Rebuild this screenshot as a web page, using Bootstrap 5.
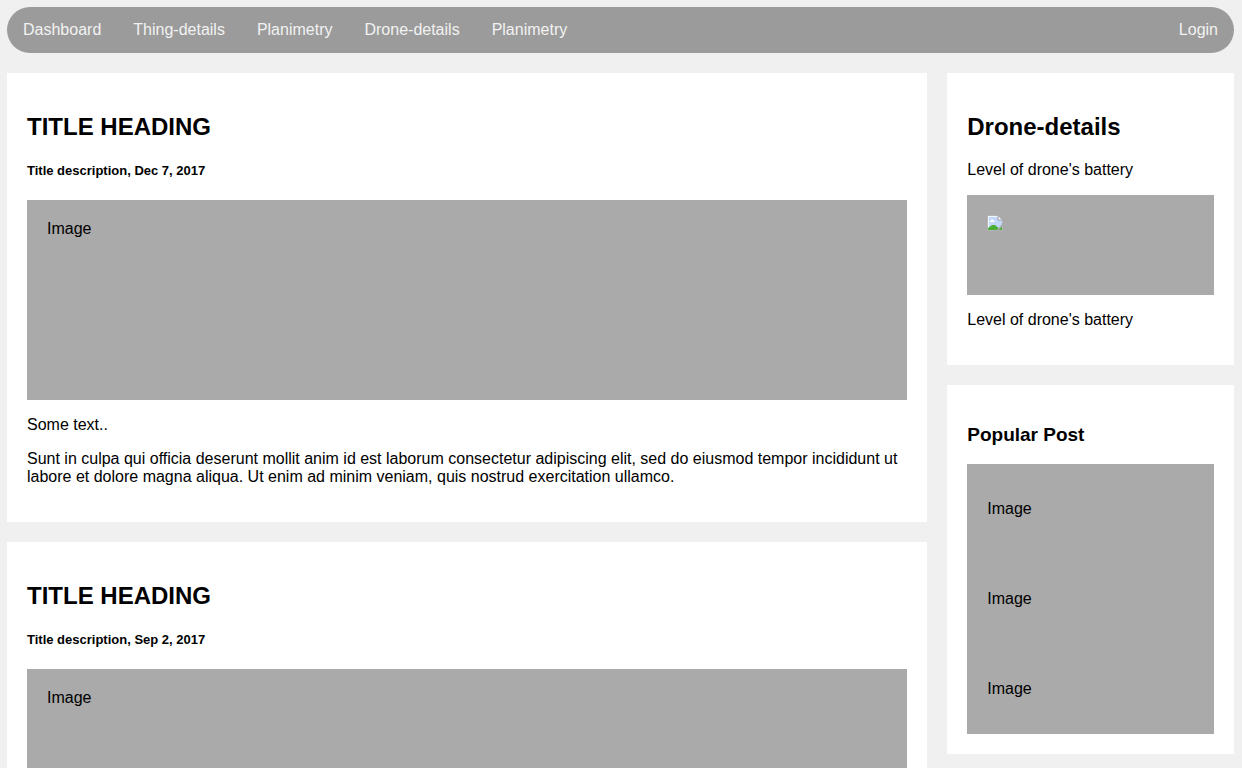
<!DOCTYPE html>
<html lang="en">
<head>
<meta charset="utf-8">
<meta name="viewport" content="width=device-width, initial-scale=1">
<title>Drone-details</title>
<link href="https://cdn.jsdelivr.net/npm/bootstrap@5.3.0/dist/css/bootstrap.min.css" rel="stylesheet">
<style>
  body { background: #f0f0f0; color: #000; font-family: "Liberation Sans", Arial, sans-serif; font-size: 16px; line-height: 18px; padding: 7px 8px 20px 7px; }
  .topnav { background: #9b9b9b; border-radius: 24px; }
  .topnav .navbar-nav .nav-link { color: #f2f2f2; padding: 14px 16px; }
  .topnav .navbar-nav .nav-link:hover { color: #000; background: #ddd; }
  .panel { background: #fff; padding: 20px; margin-top: 20px; }
  .side { padding-left: 20px; }
  h2 { font-size: 24px; line-height: 28px; font-weight: 700; margin: 20px 0; }
  h3 { font-size: 19px; line-height: 21px; font-weight: 700; margin: 19px 0; }
  h5 { font-size: 13px; line-height: 19px; font-weight: 700; margin: 0 0 20px; }
  p { margin: 16px 0; }
  .picture { background: #aaa; padding: 20px; }
  .tall { height: 200px; }
  .short { height: 100px; }
  .post { height: 90px; }
</style>
</head>
<body>
<nav class="topnav navbar navbar-expand p-0 overflow-hidden" aria-label="Main">
  <ul class="navbar-nav flex-grow-1">
    <li class="nav-item"><a class="nav-link" href="#">Dashboard</a></li>
    <li class="nav-item"><a class="nav-link" href="#">Thing-details</a></li>
    <li class="nav-item"><a class="nav-link" href="#">Planimetry</a></li>
    <li class="nav-item"><a class="nav-link" href="#">Drone-details</a></li>
    <li class="nav-item"><a class="nav-link" href="#">Planimetry</a></li>
    <li class="nav-item ms-auto"><a class="nav-link" href="#">Login</a></li>
  </ul>
</nav>

<div class="row g-0">
  <main class="col-9">
    <article class="panel">
      <h2>TITLE HEADING</h2>
      <h5>Title description, Dec 7, 2017</h5>
      <div class="picture tall">Image</div>
      <p>Some text..</p>
      <p>Sunt in culpa qui officia deserunt mollit anim id est laborum consectetur adipiscing elit, sed do eiusmod tempor incididunt ut labore et dolore magna aliqua. Ut enim ad minim veniam, quis nostrud exercitation ullamco.</p>
    </article>
    <article class="panel">
      <h2>TITLE HEADING</h2>
      <h5>Title description, Sep 2, 2017</h5>
      <div class="picture tall">Image</div>
    </article>
  </main>

  <aside class="col-3 side">
    <section class="panel">
      <h2>Drone-details</h2>
      <p>Level of drone's battery</p>
      <div class="picture short">
        <svg class="d-block" width="16" height="16" viewBox="0 0 16 16" aria-hidden="true">
          <path d="M.5.5h10.500l4.500 4.500v10.500H.5z" fill="#c3d8f8" stroke="#b4b4b4"/>
          <path d="M1 1h10v1H2v13H1z" fill="#f4f8ff"/>
          <path d="M11 .5v4.500h4.500z" fill="#fff" stroke="#a0a0a0"/>
          <path d="M3 7V5.500h1V4.500h2v1h1.500V7z" fill="#fff"/>
          <path d="M1 15v-2l4-3h3l6 5z" fill="#4caf35"/>
          <path d="M9 16 16 8v2.500L11.500 16z" fill="#aaa"/>
          <path d="M12 15l3-3.500V15z" fill="#4caf35"/>
        </svg>
      </div>
      <p>Level of drone's battery</p>
    </section>
    <section class="panel">
      <h3>Popular Post</h3>
      <div class="picture post"><p>Image</p></div>
      <div class="picture post"><p>Image</p></div>
      <div class="picture post"><p>Image</p></div>
    </section>
  </aside>
</div>
<script src="https://cdn.jsdelivr.net/npm/bootstrap@5.3.0/dist/js/bootstrap.bundle.min.js"></script>
</body>
</html>
